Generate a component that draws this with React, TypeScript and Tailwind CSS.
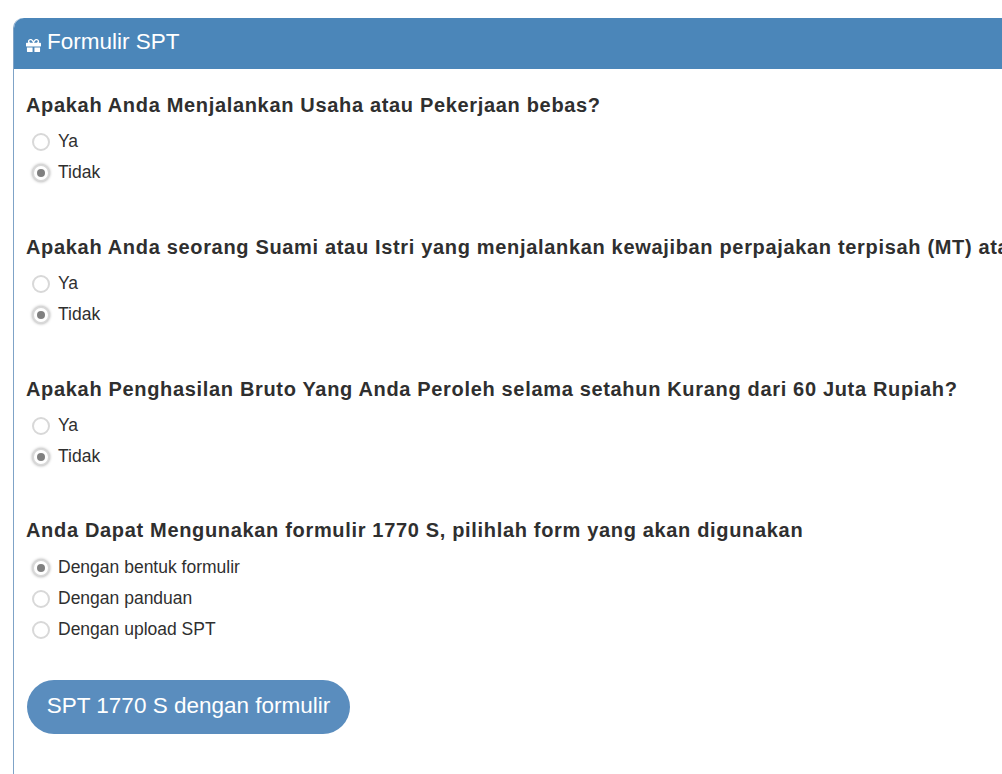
import { FaGift } from "react-icons/fa";

const font = { fontFamily: '"Liberation Sans", Arial, sans-serif' };

interface QuestionProps {
  title: string;
  options: string[];
  selected: number;
  lifted?: boolean;
}

function Radio({ checked }: { checked: boolean }) {
  return (
    <span
      className={
        "flex h-[18px] w-[18px] shrink-0 items-center justify-center rounded-full border-2 border-[#d8d8d8] bg-white" +
        (checked ? " shadow-[0_0_3px_#aaa]" : "")
      }
    >
      {checked && <span className="h-2 w-2 rounded-full bg-[#808080] blur-[0.4px]" />}
    </span>
  );
}

function Question({ title, options, selected, lifted }: QuestionProps) {
  return (
    <div className={lifted ? "-mt-px" : ""}>
      <h4 className="h-[23px] text-[20px] leading-[23px] font-bold tracking-[0.67px] whitespace-nowrap text-[#2f2f2f]">
        {title}
      </h4>
      <div className={lifted ? "mt-[10px] flex flex-col" : "mt-[9px] flex flex-col"}>
        {options.map((o, i) => (
          <label key={o} className="flex h-[31px] items-center pl-[6px]">
            <Radio checked={i === selected} />
            <span className="mb-[1px] ml-[8px] text-[17.5px] text-[#2f2f2f]">{o}</span>
          </label>
        ))}
      </div>
    </div>
  );
}

export default function App() {
  return (
    <div className="h-[774px] w-[1002px] overflow-hidden bg-white pt-[18px] pl-[13px]" style={font}>
      <div className="h-[800px] w-[1100px] rounded-t-[10px] border-l border-[#7fa3c7]">
        <div className="flex h-[51px] items-center rounded-t-[10px] bg-[#4b86b9] pl-[12px] text-white">
          <FaGift size={15} className="mt-[4px]" />
          <span className="mb-[3px] ml-[6px] text-[22.5px]">Formulir SPT</span>
        </div>
        <div className="flex flex-col gap-[48px] pt-[25px] pl-[12px]">
          <Question
            title="Apakah Anda Menjalankan Usaha atau Pekerjaan bebas?"
            options={["Ya", "Tidak"]}
            selected={1}
          />
          <Question
            title="Apakah Anda seorang Suami atau Istri yang menjalankan kewajiban perpajakan terpisah (MT) atau Pisah Harta (PH)?"
            options={["Ya", "Tidak"]}
            selected={1}
          />
          <Question
            title="Apakah Penghasilan Bruto Yang Anda Peroleh selama setahun Kurang dari 60 Juta Rupiah?"
            options={["Ya", "Tidak"]}
            selected={1}
          />
          <Question
            title="Anda Dapat Mengunakan formulir 1770 S, pilihlah form yang akan digunakan"
            options={["Dengan bentuk formulir", "Dengan panduan", "Dengan upload SPT"]}
            selected={0}
            lifted
          />
        </div>
        <button className="mt-[35px] ml-[13px] flex h-[54px] w-[323px] items-center justify-center rounded-full bg-[#5a8dbe] pb-[3px] text-[22.5px] text-white">
          SPT 1770 S dengan formulir
        </button>
      </div>
    </div>
  );
}
